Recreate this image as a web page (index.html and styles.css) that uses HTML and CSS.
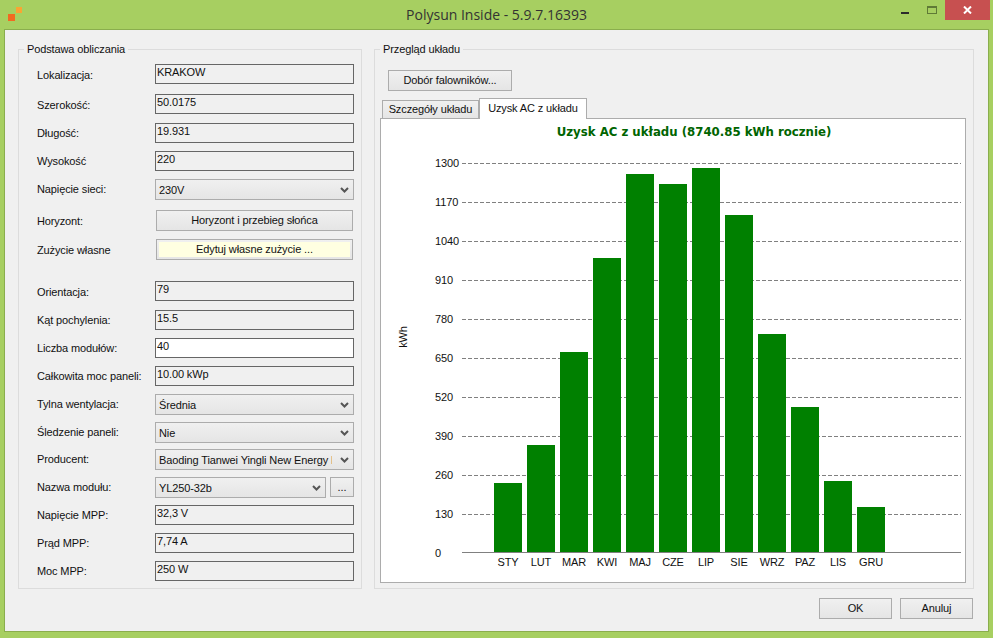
FILE: index.html
```html
<!DOCTYPE html>
<html lang="pl">
<head>
<meta charset="UTF-8">
<title>Polysun Inside</title>
<link rel="stylesheet" href="styles.css">
</head>
<body>
<div class="TITLEBAR">
    <div class="TITLE_LEFT">
        <svg class="LOGO" width="16" height="16" viewBox="0 0 16 16">
            <rect x="8" y="0" width="6" height="6" fill="#f9a533"/>
            <rect x="0" y="7" width="7" height="7" fill="#f26a21"/>
        </svg>
    </div>
    <div class="TITLE_TEXT">Polysun Inside - 5.9.7.16393</div>
    <div class="TITLE_RIGHT">
        <svg class="WIN_MIN" width="8" height="2" viewBox="0 0 8 2"><rect width="8" height="2" fill="#2b2b2b"/></svg>
        <svg class="WIN_MAX" width="10" height="8" viewBox="0 0 10 8"><rect x="0.5" y="0.5" width="9" height="7" fill="none" stroke="#5f7a36"/><rect x="0" y="0" width="10" height="2" fill="#5f7a36"/></svg>
        <div class="WIN_CLOSE">
            <svg width="9" height="8" viewBox="0 0 9 8"><path d="M1 0.5 L8 7.5 M8 0.5 L1 7.5" stroke="#fff" stroke-width="2" fill="none"/></svg>
        </div>
    </div>
</div>
<div class="CLIENT">
    <div class="PANELS">
        <fieldset class="GROUP">
            <legend>Podstawa obliczania</legend>
            <div class="FORM">
                <span class="LBL LBL_LOW">Lokalizacja:</span><div class="FIELD">KRAKOW</div>
                <span class="LBL LBL_LOW">Szerokość:</span><div class="FIELD">50.0175</div>
                <span class="LBL">Długość:</span><div class="FIELD">19.931</div>
                <span class="LBL">Wysokość</span><div class="FIELD">220</div>
                <span class="LBL">Napięcie sieci:</span>
                <div class="SELECT"><span class="SELECT_TEXT">230V</span><svg class="CHEVRON" width="9" height="6" viewBox="0 0 9 6"><path d="M1 1 L4.5 4.5 L8 1" fill="none" stroke="#555" stroke-width="2"/></svg></div>
                <span class="LBL LBL_LOW">Horyzont:</span><div class="BTN BTN_WIDE">Horyzont i przebieg słońca</div>
                <span class="LBL LBL_LOW">Zużycie własne</span><div class="BTN BTN_WIDE BTN_YELLOW"><span>Edytuj własne zużycie ...</span></div>
                <span class="LBL LBL_LOW">Orientacja:</span><div class="FIELD">79</div>
                <span class="LBL">Kąt pochylenia:</span><div class="FIELD">15.5</div>
                <span class="LBL">Liczba modułów:</span><div class="FIELD FIELD_WHITE">40</div>
                <span class="LBL">Całkowita moc paneli:</span><div class="FIELD">10.00 kWp</div>
                <span class="LBL">Tylna wentylacja:</span>
                <div class="SELECT"><span class="SELECT_TEXT">Średnia</span><svg class="CHEVRON" width="9" height="6" viewBox="0 0 9 6"><path d="M1 1 L4.5 4.5 L8 1" fill="none" stroke="#555" stroke-width="2"/></svg></div>
                <span class="LBL">Śledzenie paneli:</span>
                <div class="SELECT"><span class="SELECT_TEXT">Nie</span><svg class="CHEVRON" width="9" height="6" viewBox="0 0 9 6"><path d="M1 1 L4.5 4.5 L8 1" fill="none" stroke="#555" stroke-width="2"/></svg></div>
                <span class="LBL">Producent:</span>
                <div class="SELECT"><span class="SELECT_TEXT">Baoding Tianwei Yingli New Energy Resources</span><svg class="CHEVRON" width="9" height="6" viewBox="0 0 9 6"><path d="M1 1 L4.5 4.5 L8 1" fill="none" stroke="#555" stroke-width="2"/></svg></div>
                <span class="LBL">Nazwa modułu:</span>
                <div class="SELECT_ROW">
                    <div class="SELECT"><span class="SELECT_TEXT">YL250-32b</span><svg class="CHEVRON" width="9" height="6" viewBox="0 0 9 6"><path d="M1 1 L4.5 4.5 L8 1" fill="none" stroke="#555" stroke-width="2"/></svg></div>
                    <div class="BTN BTN_DOTS">...</div>
                </div>
                <span class="LBL">Napięcie MPP:</span><div class="FIELD">32,3 V</div>
                <span class="LBL">Prąd MPP:</span><div class="FIELD">7,74 A</div>
                <span class="LBL">Moc MPP:</span><div class="FIELD">250 W</div>
            </div>
        </fieldset>
        <fieldset class="GROUP GROUP_RIGHT">
            <legend>Przegląd układu</legend>
            <div class="BTN BTN_INV">Dobór falowników...</div>
            <div class="TABS">
                <div class="TAB">Szczegóły układu</div>
                <div class="TAB TAB_ACTIVE">Uzysk AC z układu</div>
            </div>
            <div class="TABPANEL">
                <svg class="CHART" width="584" height="463" viewBox="381 119 584 463">
                    <text class="CHART_TITLE" x="694" y="136" text-anchor="middle">Uzysk AC z układu (8740.85 kWh rocznie)</text>
                    <g class="GRID">
                        <path d="M462 163.5H961"/><path d="M462 202.5H961"/><path d="M462 241.5H961"/><path d="M462 280.5H961"/><path d="M462 319.5H961"/>
                        <path d="M462 358.5H961"/><path d="M462 397.5H961"/><path d="M462 436.5H961"/><path d="M462 475.5H961"/><path d="M462 514.5H961"/>
                    </g>
                    <g class="AXIS_Y">
                        <text x="435" y="167">1300</text><text x="435" y="206">1170</text><text x="435" y="245">1040</text><text x="435" y="284">910</text><text x="435" y="323">780</text>
                        <text x="435" y="362">650</text><text x="435" y="401">520</text><text x="435" y="440">390</text><text x="435" y="479">260</text><text x="435" y="518">130</text><text x="435" y="557">0</text>
                    </g>
                    <text class="AXIS_NAME" transform="translate(407 337) rotate(-90)" text-anchor="middle">kWh</text>
                    <g fill="#008000">
                        <rect x="494" y="483" width="28" height="69"/><rect x="527" y="445" width="28" height="107"/><rect x="560" y="352" width="28" height="200"/>
                        <rect x="593" y="258" width="28" height="294"/><rect x="626" y="174" width="28" height="378"/><rect x="659" y="184" width="28" height="368"/>
                        <rect x="692" y="168" width="28" height="384"/><rect x="725" y="215" width="28" height="337"/><rect x="758" y="334" width="28" height="218"/>
                        <rect x="791" y="407" width="28" height="145"/><rect x="824" y="481" width="28" height="71"/><rect x="857" y="507" width="28" height="45"/>
                    </g>
                    <rect x="462" y="552" width="499" height="1" fill="#808080"/>
                    <g class="AXIS_X" text-anchor="middle">
                        <text x="508" y="566">STY</text><text x="541" y="566">LUT</text><text x="574" y="566">MAR</text><text x="607" y="566">KWI</text><text x="640" y="566">MAJ</text><text x="673" y="566">CZE</text>
                        <text x="706" y="566">LIP</text><text x="739" y="566">SIE</text><text x="772" y="566">WRZ</text><text x="805" y="566">PAZ</text><text x="838" y="566">LIS</text><text x="871" y="566">GRU</text>
                    </g>
                </svg>
            </div>
        </fieldset>
    </div>
    <div class="FOOTER">
        <div class="BTN BTN_FOOT">OK</div>
        <div class="BTN BTN_FOOT">Anuluj</div>
    </div>
</div>
</body>
</html>
```
FILE: styles.css
```css
html, body {
    margin: 0;
    height: 100%;
}
body {
    background: #a7cf61;
    font-family: "Liberation Sans", Arial, sans-serif;
    font-size: 11px;
    letter-spacing: -0.12px;
    color: #111;
    overflow: hidden;
}
.TITLEBAR {
    display: grid;
    grid-template-columns: 1fr auto 1fr;
    height: 29px;
}
.TITLE_LEFT {
    padding: 7px 0 0 8px;
}
.LOGO {
    display: block;
}
.TITLE_TEXT {
    font-family: "Open Sans", sans-serif;
    font-size: 14px;
    letter-spacing: 0;
    line-height: 29px;
    color: #333;
}
.TITLE_RIGHT {
    display: flex;
    justify-content: flex-end;
    align-items: flex-start;
    padding-right: 3px;
}
.WIN_MIN {
    margin: 12px 18px 0 0;
}
.WIN_MAX {
    margin: 6px 8px 0 0;
}
.WIN_CLOSE {
    width: 45px;
    height: 20px;
    background: #c75050;
    display: flex;
    align-items: center;
    justify-content: center;
}
.CLIENT {
    margin: 0 4px;
    width: 985px;
    height: 603px;
    box-sizing: border-box;
    background: #f0f0f0;
    border: 1px solid #8aae4d;
    padding: 12px 14px 0 13px;
}
.PANELS {
    display: grid;
    grid-template-columns: 344px 600px;
    column-gap: 12px;
}
.GROUP {
    margin: 0;
    padding: 8px 0 0 0;
    height: 547px;
    box-sizing: border-box;
    min-width: 0;
    border: 1px solid #dcdcdc;
}
.GROUP legend {
    margin-left: 5px;
    padding: 0 3px;
    line-height: 14px;
    font-size: 11px;
}
.GROUP_RIGHT {
    padding-top: 14px;
}
.FORM {
    display: grid;
    grid-template-columns: 118px 199px;
    grid-template-rows: 30px 29px 28px 28px 31px 29px 42px 29px 28px 28px 28px 28px 27px 28px 28px 28px 28px 20px;
    align-items: start;
    margin-left: 18px;
}
.LBL {
    line-height: 20px;
    white-space: nowrap;
}
.LBL_LOW {
    line-height: 22px;
}
.FIELD {
    height: 20px;
    box-sizing: border-box;
    border: 1px solid #666;
    padding: 0 1px;
    line-height: 15px;
}
.FIELD_WHITE {
    background: #fff;
}
.SELECT {
    height: 21px;
    box-sizing: border-box;
    border: 1px solid #acacac;
    background: linear-gradient(#f0f0f0, #e5e5e5);
    display: flex;
    align-items: center;
    padding-left: 3px;
}
.SELECT_TEXT {
    flex: 1;
    min-width: 0;
    overflow: hidden;
    white-space: nowrap;
    margin-right: 5px;
}
.CHEVRON {
    margin: 0 4px 0 3px;
    flex: none;
}
.SELECT_ROW {
    display: flex;
    gap: 4px;
}
.SELECT_ROW .SELECT {
    flex: 1;
}
.BTN {
    box-sizing: border-box;
    border: 1px solid #acacac;
    background: linear-gradient(#f0f0f0, #e5e5e5);
    text-align: center;
    height: 21px;
    line-height: 19px;
}
.BTN_WIDE {
    margin: 0 1px;
}
.BTN_YELLOW {
    padding: 2px;
    line-height: 15px;
}
.BTN_YELLOW span {
    display: block;
    height: 15px;
    background: #ffffe1;
}
.BTN_DOTS {
    flex: none;
    width: 24px;
    height: 20px;
}
.BTN_INV {
    width: 124px;
    margin-left: 13px;
}
.TABS {
    display: flex;
    align-items: flex-end;
    height: 20px;
    margin: 7px 0 0 7px;
}
.TAB {
    box-sizing: border-box;
    height: 18px;
    width: 97px;
    border: 1px solid #acacac;
    border-bottom: 0;
    background: linear-gradient(#f0f0f0, #e5e5e5);
    text-align: center;
    line-height: 17px;
}
.TAB_ACTIVE {
    height: 21px;
    width: 108px;
    margin: 0 0 -1px 0;
    background: #fff;
    position: relative;
    z-index: 1;
    line-height: 18px;
}
.TABPANEL {
    box-sizing: border-box;
    width: 586px;
    height: 465px;
    margin-left: 5px;
    background: #fff;
    border: 1px solid #acacac;
}
.CHART {
    display: block;
}
.CHART text {
    font-family: "Liberation Sans", Arial, sans-serif;
    font-size: 11px;
    fill: #111;
}
.CHART .CHART_TITLE {
    font-family: "DejaVu Sans", Verdana, sans-serif;
    font-size: 11.75px;
    font-weight: bold;
    letter-spacing: 0;
    fill: #006400;
}
.GRID path {
    stroke: #808080;
    stroke-width: 1;
    stroke-dasharray: 4 2;
    fill: none;
}
.FOOTER {
    display: flex;
    justify-content: flex-end;
    gap: 8px;
    margin-top: 9px;
    padding-right: 1px;
}
.BTN_FOOT {
    width: 73px;
}
```
